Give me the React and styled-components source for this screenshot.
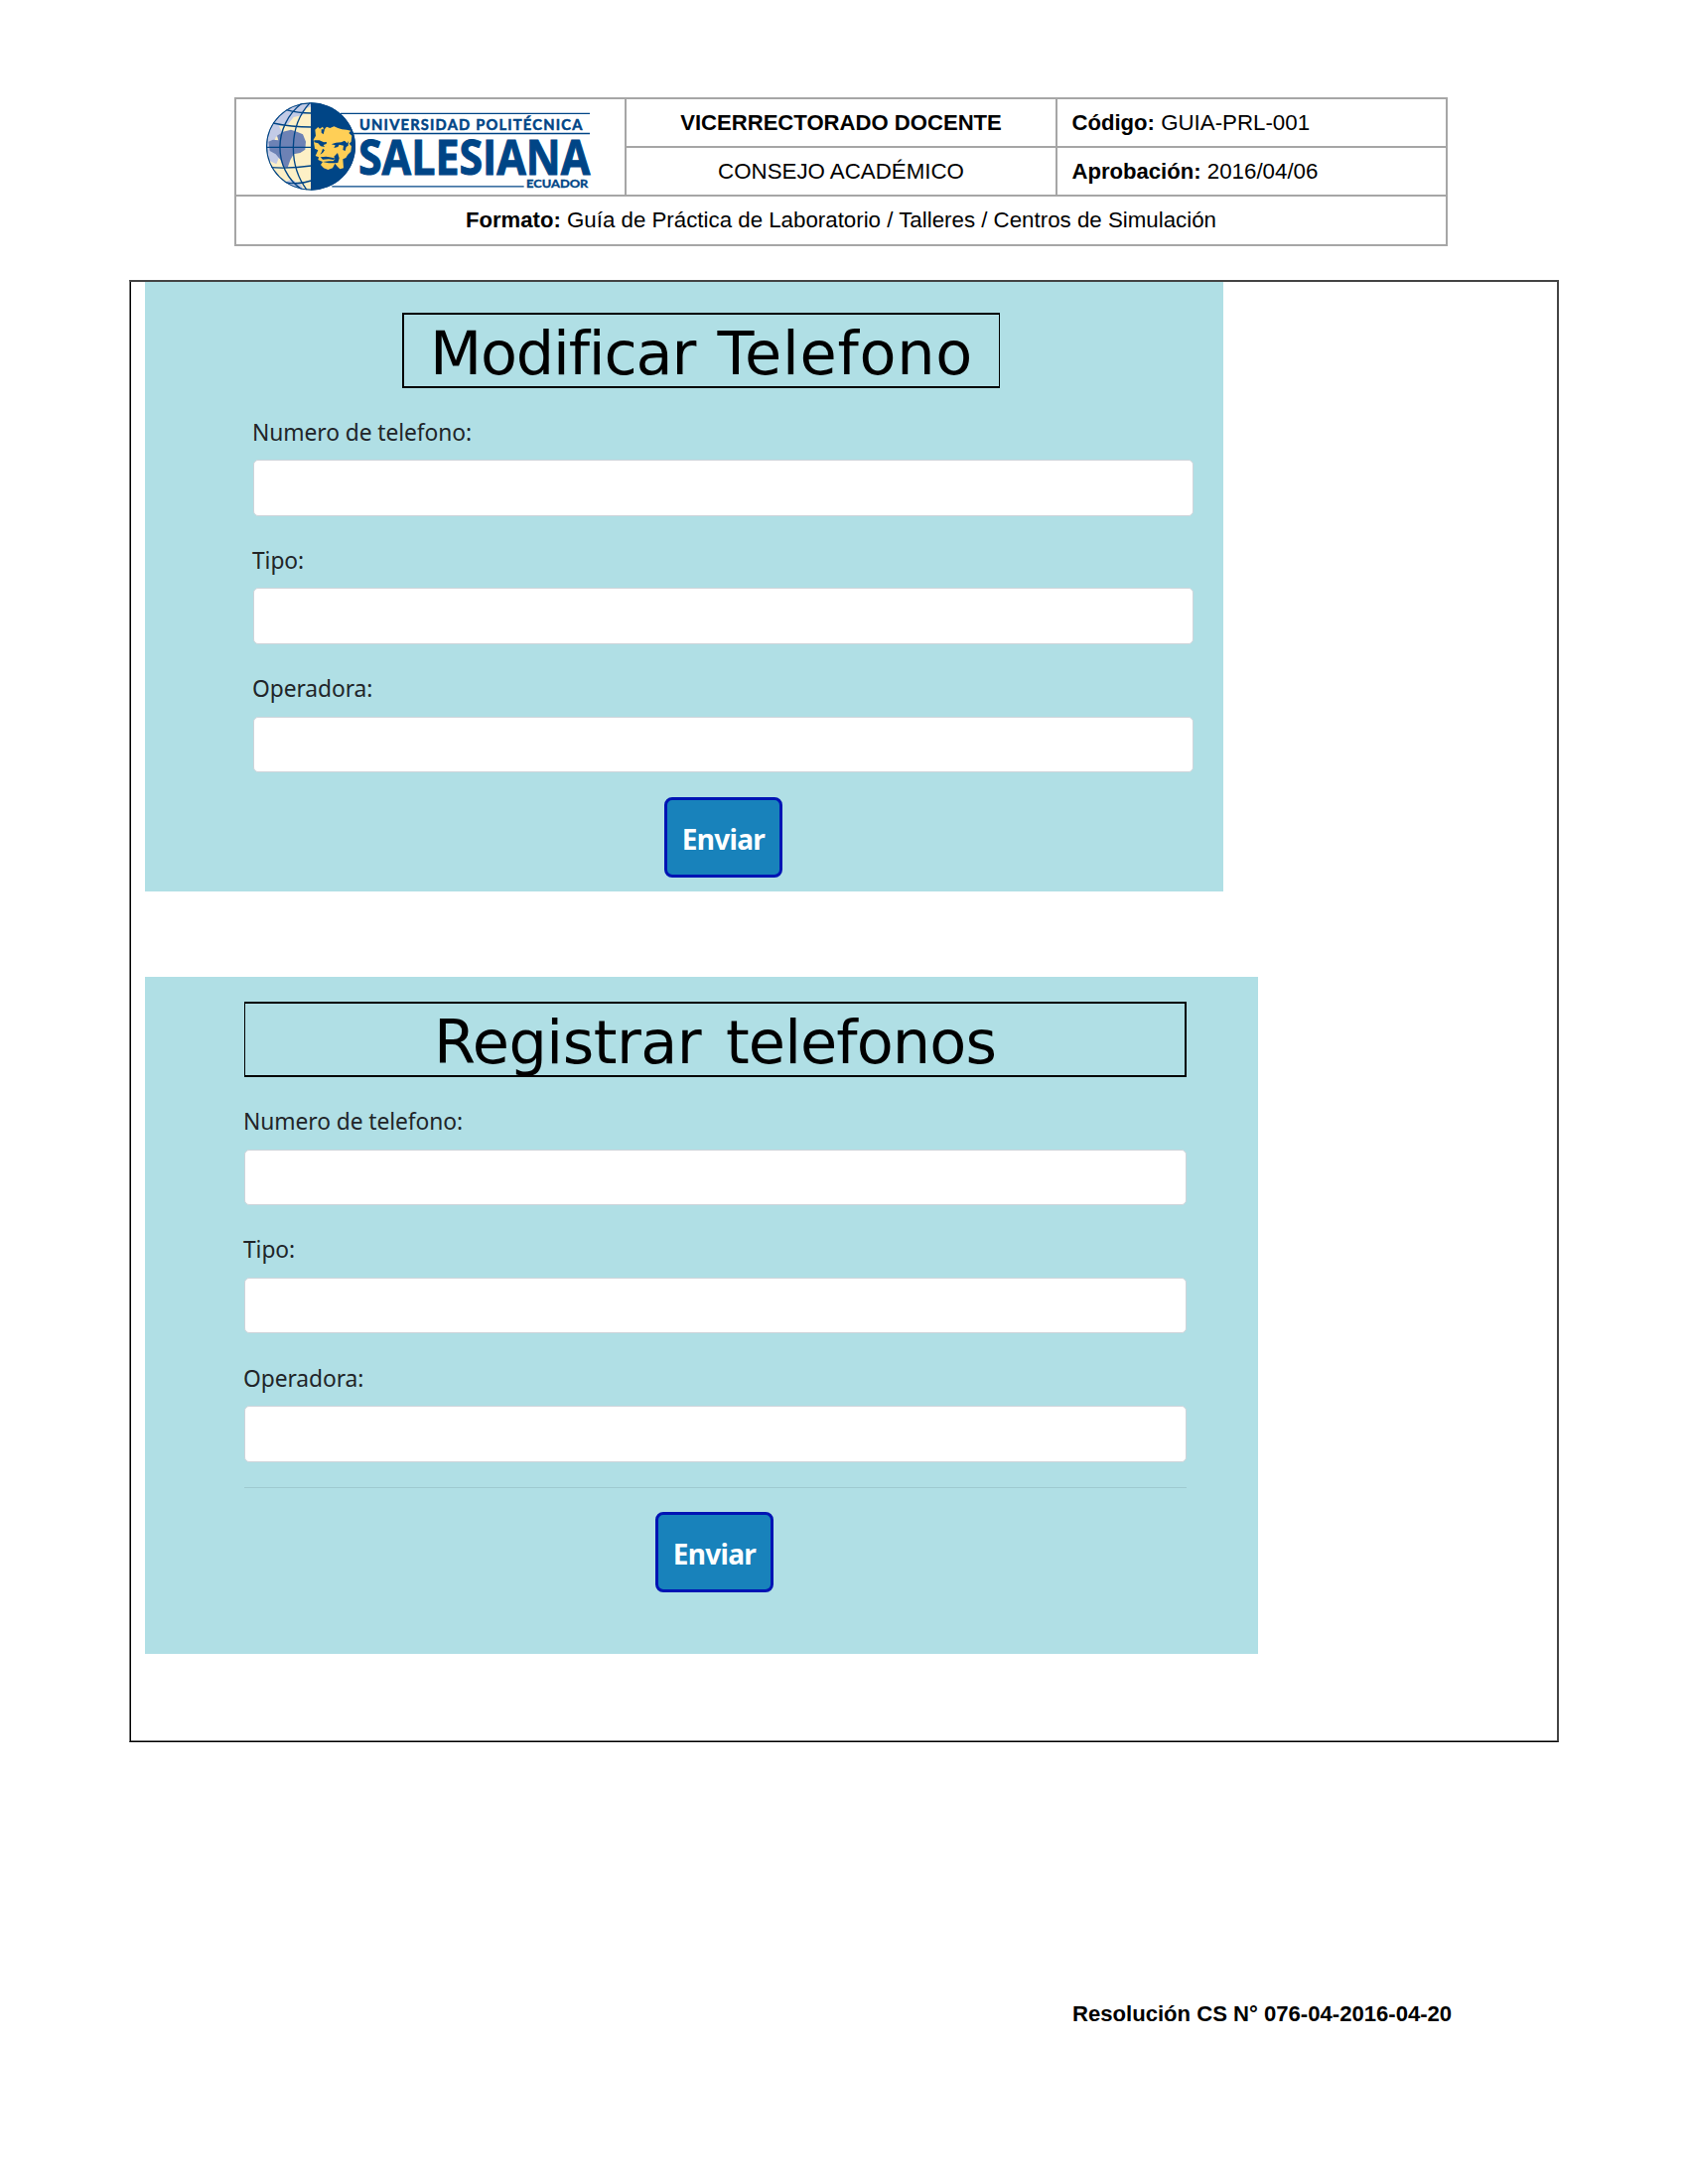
import React from "react";
import styled, { createGlobalStyle } from "styled-components";

const GlobalStyle = createGlobalStyle`
  *, *::before, *::after { box-sizing: border-box; }
  body { margin: 0; background: #fff; }
`;

const Page = styled.div`
  width: 1700px;
  height: 2200px;
  padding: 98px 130px 0;
  display: flex;
  flex-direction: column;
  background: #fff;
  color: #000;
  font-family: "Liberation Sans", Arial, sans-serif;
  font-size: 22.3px;
`;

const Strong = styled.b`
  font-size: 22.1px;
`;

const HeaderTable = styled.header`
  width: 1222px;
  height: 150px;
  margin-left: 106px;
  border: 2px solid #a6a6a6;
  display: grid;
  grid-template-columns: 393px 434px 1fr;
  grid-template-rows: 49px 49px 1fr;
`;

const Cell = styled.div`
  display: flex;
  align-items: center;
  justify-content: ${(p) => (p.$start ? "flex-start" : "center")};
  padding: ${(p) => (p.$start ? "0 0 0 14.5px" : `${p.$drop || 0}px 0 0`)};
  border-right: ${(p) => (p.$last ? 0 : 2)}px solid #a6a6a6;
  border-bottom: ${(p) => (p.$bottom ? 0 : 2)}px solid #a6a6a6;
  grid-row: ${(p) => p.$row || "auto"};
  grid-column: ${(p) => p.$col || "auto"};
  white-space: pre;
`;

const LogoCell = styled(Cell)`
  align-items: flex-start;
  justify-content: flex-start;
  padding-left: 27px;
`;

const LogoMark = styled.svg`
  display: block;
  overflow: visible;
`;

const Frame = styled.main`
  width: 1440px;
  height: 1473px;
  margin-top: 34px;
  padding-left: 15px;
  border-top: 2px solid #444;
  border-right: 2px solid #444;
  border-left: 1px solid #777;
  border-bottom: 1px solid #000;
  box-shadow: inset 1px 0 0 #000, inset 0 -1px 0 #777;
  display: flex;
  flex-direction: column;
  align-items: flex-start;
  gap: 86px;
`;

const Panel = styled.form`
  width: ${(p) => p.$width}px;
  height: ${(p) => p.$height}px;
  padding: ${(p) => p.$padding};
  background: #b0dfe5;
  display: flex;
  flex-direction: column;
`;

const Title = styled.h1`
  width: ${(p) => p.$width}px;
  height: 76px;
  margin: 0 0 ${(p) => p.$after}px ${(p) => p.$indent || 0}px;
  padding-top: 3px;
  border: 2px solid #000;
  border-right-width: ${(p) => (p.$thin === "right" ? 1 : 2)}px;
  border-left-width: ${(p) => (p.$thin === "left" ? 1 : 2)}px;
  font: 400 60.5px/72px "DejaVu Sans", Verdana, sans-serif;
  word-spacing: ${(p) => p.$wordSpacing}px;
  font-variant-ligatures: none;
  text-align: center;
  white-space: nowrap;
`;

const Word = styled.span`
  letter-spacing: ${(p) => p.$spacing}px;
`;

const Field = styled.label`
  display: flex;
  flex-direction: column;
  gap: 8.5px;
  margin-bottom: 25.3px;
  color: #212529;
  font: 400 22.8px/39px "Noto Sans", "Open Sans", sans-serif;
  letter-spacing: -0.08px;
`;

const FieldName = styled.span`
  margin-left: -1px;
`;

const Input = styled.input`
  width: 100%;
  height: 56.5px;
  margin: 0;
  border: 1px solid #ced4da;
  border-radius: 5px;
  background: #fff;
`;

const Rule = styled.hr`
  width: 949px;
  height: 1px;
  margin: 0 0 24px;
  border: 0;
  background: #9fc9cf;
`;

const SendButton = styled.button`
  width: 119px;
  height: 81px;
  margin-left: ${(p) => p.$indent}px;
  padding: 3px 0 0;
  border: 3px solid #0014b4;
  border-radius: 8px;
  background: #1882bb;
  color: #fff;
  font: 700 28px/36px "Noto Sans", "Open Sans", sans-serif;
  letter-spacing: -0.7px;
`;

const Resolution = styled.footer`
  margin: 261px 0 0 950px;
  line-height: 26px;
  white-space: nowrap;
`;

const NAVY = "#004586";

function Logo() {
  return (
    <LogoMark width="333.33" height="95" viewBox="120 30 1000 285" role="img" aria-label="Universidad Politécnica Salesiana">
      <defs>
        <clipPath id="globe">
          <ellipse cx="264" cy="172.5" rx="135" ry="132.5" />
        </clipPath>
      </defs>
      <g clipPath="url(#globe)">
        <rect x="125" y="35" width="145" height="275" fill="#fdf0c6" />
        <path d="M265 40H205L150 90 130 140V180L138 215 160 226 172 196 150 170 158 145 178 130 168 112 196 104 212 84 240 78 250 58 265 52Z" fill="#c3cbe6" />
        <path d="M136 158L150 152 166 154 162 140 180 128 204 122 222 128 240 136 249 158 247 182 232 192 212 196 202 214 194 236 180 234 172 212 158 196 140 186Z" fill="#6d82b5" />
        <path d="M186 280L206 272 232 286 244 304H205Z" fill="#c3cbe6" />
        <g fill="none" stroke={NAVY} strokeWidth="4">
          <path d="M236 43C150 110 148 240 236 302" />
          <path d="M262 40C196 110 196 230 252 304" />
          <path d="M128 175H265" />
          <path d="M150 102Q205 114 265 114" />
          <path d="M190 62Q225 72 265 72" />
          <path d="M140 236Q205 240 265 231" />
          <path d="M182 280Q225 290 265 276" />
        </g>
        <ellipse cx="264" cy="172.500" rx="134" ry="131.500" fill="none" stroke={NAVY} strokeWidth="5" />
        <rect x="264" y="35" width="140" height="275" fill={NAVY} />
      </g>
      <path
        fill="#ffcf56"
        d="M277 122L286 114 291 119 300 113 304 122 312 113 322 117 334 112 346 117 358 121 372 122 385 125 379 132 388 140 386 158 380 164 387 172 385 188 376 197 370 207 361 211 363 238 352 241 345 234 337 224 330 238 316 243 303 238 294 228 300 219 286 213 288 205 278 201 286 184 276 179 272 152 279 140Z"
      />
      <path
        fill={NAVY}
        d="M274 154L290 154 303 160 312 159 311 165 302 168 306 174 294 172 286 163 274 160ZM326 166L340 161 356 160 366 155 374 163 378 156 377 170 371 174 368 186 361 183 363 170 350 167 346 174 334 177 338 169ZM300 179L306 184 300 192 292 197 297 189ZM293 205L310 203 320 205 336 208 334 213 318 211 300 212ZM300 219L320 217 332 217 337 211 334 203 345 192 350 208 346 222 337 223 318 223ZM296 121L306 121 302 136 296 131Z"
      />
      <g stroke={NAVY} strokeWidth="4">
        <path d="M354 73H1107" />
        <path d="M390 133.500H1107" />
        <path d="M328 293.500H908" />
      </g>
      <g fill={NAVY} stroke={NAVY} fontWeight="700">
        <text x="411" y="123" fontFamily="Lato, sans-serif" fontSize="44" strokeWidth="1.500" textLength="673">
          UNIVERSIDAD POLITÉCNICA
        </text>
        <text x="408" y="257" fontFamily="'Open Sans', sans-serif" fontSize="146" strokeWidth="3" textLength="700" lengthAdjust="spacingAndGlyphs">
          SALESIANA
        </text>
        <text x="915" y="298.500" fontFamily="Lato, sans-serif" fontSize="32" strokeWidth="1" textLength="187" lengthAdjust="spacingAndGlyphs">
          ECUADOR
        </text>
      </g>
    </LogoMark>
  );
}

const fields = ["Numero de telefono:", "Tipo:", "Operadora:"];

function Fields() {
  return fields.map((name) => (
    <Field key={name}>
      <FieldName>{name}</FieldName>
      <Input type="text" />
    </Field>
  ));
}

export default function App() {
  return (
    <>
      <GlobalStyle />
      <Page>
        <HeaderTable>
          <LogoCell $row="1 / 3" $col="1">
            <Logo />
          </LogoCell>
          <Cell $row="1" $col="2">
            <Strong>VICERRECTORADO DOCENTE</Strong>
          </Cell>
          <Cell $row="1" $col="3" $start $last>
            <Strong>Código:</Strong> GUIA-PRL-001
          </Cell>
          <Cell $row="2" $col="2" $drop={1}>
            CONSEJO ACADÉMICO
          </Cell>
          <Cell $row="2" $col="3" $start $last>
            <Strong>Aprobación:</Strong> 2016/04/06
          </Cell>
          <Cell $row="3" $col="1 / 4" $last $bottom>
            <Strong>Formato:</Strong> Guía de Práctica de Laboratorio / Talleres / Centros de Simulación
          </Cell>
        </HeaderTable>

        <Frame>
          <Panel $width={1086} $height={614} $padding="31px 30px 0 109px">
            <Title $width={602} $indent={150} $after={24.5} $thin="right" $wordSpacing={3}>
              <Word $spacing={-1.15}>Modificar</Word> <Word $spacing={0.75}>Telefono</Word>
            </Title>
            <Fields />
            <SendButton type="button" $indent={414}>
              Enviar
            </SendButton>
          </Panel>

          <Panel $width={1121} $height={682} $padding="25px 72px 0 100px">
            <Title $width={949} $after={25} $thin="left" $wordSpacing={5.5}>
              <Word $spacing={-0.5}>Registrar</Word> <Word $spacing={-0.9}>telefonos</Word>
            </Title>
            <Fields />
            <Rule />
            <SendButton type="button" $indent={414}>
              Enviar
            </SendButton>
          </Panel>
        </Frame>

        <Resolution>
          <Strong>Resolución CS N° 076-04-2016-04-20</Strong>
        </Resolution>
      </Page>
    </>
  );
}
